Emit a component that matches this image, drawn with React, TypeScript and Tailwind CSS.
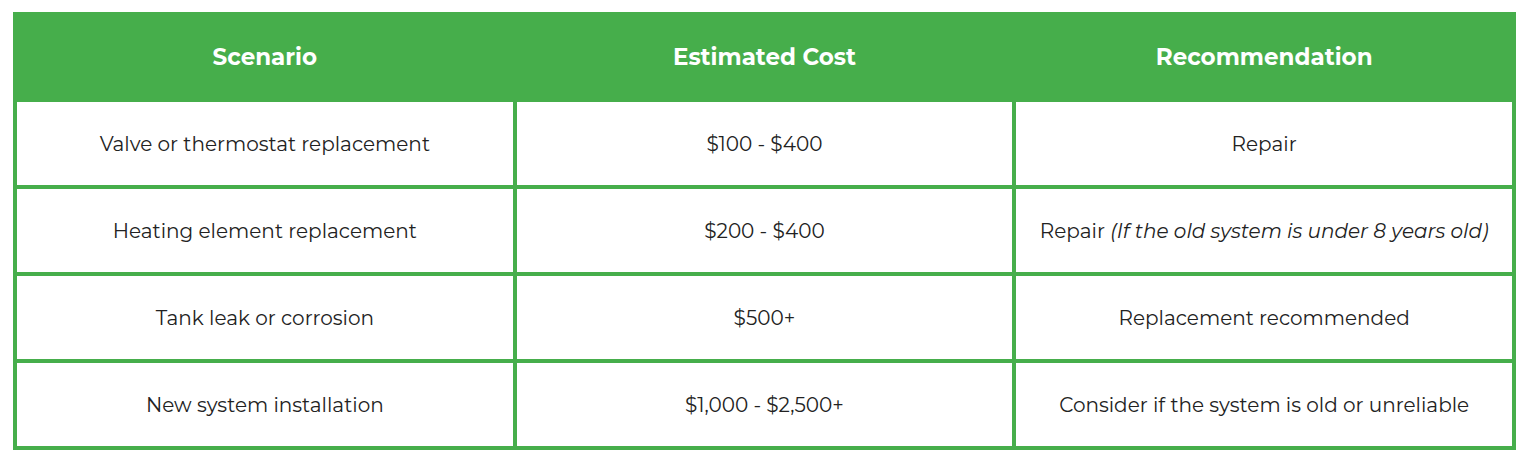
const rows = [
  { scenario: 'Valve or thermostat replacement', cost: '$100 - $400', rec: 'Repair', note: '' },
  { scenario: 'Heating element replacement', cost: '$200 - $400', rec: 'Repair', note: '(If the old system is under 8 years old)' },
  { scenario: 'Tank leak or corrosion', cost: '$500+', rec: 'Replacement recommended', note: '' },
  { scenario: 'New system installation', cost: '$1,000 - $2,500+', rec: 'Consider if the system is old or unreliable', note: '' },
]

export default function App() {
  return (
    <div className="bg-white w-[1536px] h-[469px] pt-[12px] pl-[13px] font-['Montserrat','Open_Sans','Liberation_Sans',sans-serif]">
      <table className="w-[1503px] table-fixed border-collapse border-4 border-[#46ae4b] text-center text-[20px]">
        <thead>
          <tr className="bg-[#46ae4b] text-white h-[86px] text-[23px]">
            <th className="font-bold border-4 border-[#46ae4b]">Scenario</th>
            <th className="font-bold border-4 border-[#46ae4b]">Estimated Cost</th>
            <th className="font-bold border-4 border-[#46ae4b]">Recommendation</th>
          </tr>
        </thead>
        <tbody className="text-[#222222]">
          {rows.map(r => (
            <tr key={r.scenario} className="h-[87px]">
              <td className="border-4 border-[#46ae4b] p-0">{r.scenario}</td>
              <td className="border-4 border-[#46ae4b] p-0">{r.cost}</td>
              <td className="border-4 border-[#46ae4b] p-0">
                {r.rec}
                {r.note && <em className="italic"> {r.note}</em>}
              </td>
            </tr>
          ))}
        </tbody>
      </table>
    </div>
  )
}
